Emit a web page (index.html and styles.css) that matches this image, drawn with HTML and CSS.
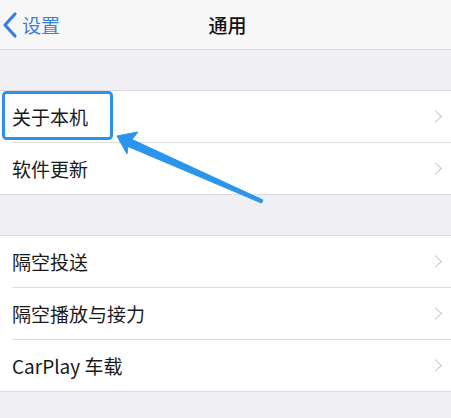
FILE: index.html
```html
<!DOCTYPE html>
<html lang="zh-CN">
<head>
  <meta charset="UTF-8" />
  <meta name="viewport" content="width=device-width, initial-scale=1.0"/>
  <title>通用</title>
  <link rel="stylesheet" href="styles.css">
</head>
<body>

<div class="navbar">
  <div class="back">
    <svg class="back-icon" width="16" height="28" viewBox="0 0 16 28">
      <path d="M13 3 L3 14 L13 25" fill="none" stroke="#3a7fdc" stroke-width="3.2" stroke-linecap="round" stroke-linejoin="round"/>
    </svg>
    <span>设置</span>
  </div>
  <div class="title">通用</div>
</div>

<div class="spacer"></div>

<div class="group">
  <div class="row"><div class="cell"><span>关于本机</span><i class="chevron"></i></div></div>
  <div class="row"><div class="cell"><span>软件更新</span><i class="chevron"></i></div></div>
</div>

<div class="spacer"></div>

<div class="group">
  <div class="row"><div class="cell"><span>隔空投送</span><i class="chevron"></i></div></div>
  <div class="row"><div class="cell"><span>隔空播放与接力</span><i class="chevron"></i></div></div>
  <div class="row"><div class="cell"><span>CarPlay 车载</span><i class="chevron"></i></div></div>
</div>

<!-- annotation on top of the screenshot -->
<svg class="annotation" width="451" height="418" viewBox="0 0 451 418">
  <rect x="3.5" y="92.5" width="108" height="46" rx="3" fill="none" stroke="#2e92ea" stroke-width="3"/>
  <path d="M117 136 L138 132 L132 139.5 L263 200 L261.5 203 L128 146.5 L127 154 Z" fill="#2b95ee" stroke="#2b95ee" stroke-width="1" stroke-linejoin="round"/>
</svg>

</body>
</html>
```

FILE: styles.css
```css
body {
  margin: 0;
  background: #efeff4;
  font-family: "Noto Sans CJK SC", "Noto Sans", sans-serif;
  color: #1a1a1a;
  position: relative;
  height: 418px;
  overflow: hidden;
}
.navbar {
  height: 49px;
  background: #f7f7f7;
  border-bottom: 1px solid #d9d9dc;
  position: relative;
  display: flex;
  align-items: center;
  justify-content: center;
}
.back {
  position: absolute;
  left: 2px;
  top: 0;
  height: 49px;
  display: flex;
  align-items: center;
  gap: 4px;
  color: #3a7fdc;
  font-size: 19px;
}
.back-icon {
  display: block;
}
.title {
  font-size: 19px;
  font-weight: 500;
  color: #111;
  margin-left: 4px;
}
.spacer {
  height: 40px;
}
.group {
  background: #fff;
  border-top: 1px solid #dcdce0;
  border-bottom: 1px solid #dcdce0;
}
.cell {
  margin-left: 12px;
  height: 51px;
  display: flex;
  align-items: center;
  justify-content: space-between;
  padding-right: 10px;
  border-bottom: 1px solid #dcdce0;
  font-size: 19px;
}
.row:last-child .cell {
  border-bottom: none;
}
.chevron {
  width: 8px;
  height: 8px;
  border-top: 1.5px solid #c4c4c8;
  border-right: 1.5px solid #c4c4c8;
  transform: rotate(45deg);
  margin-right: 1px;
}
.annotation {
  position: absolute;
  left: 0;
  top: 0;
}
```
